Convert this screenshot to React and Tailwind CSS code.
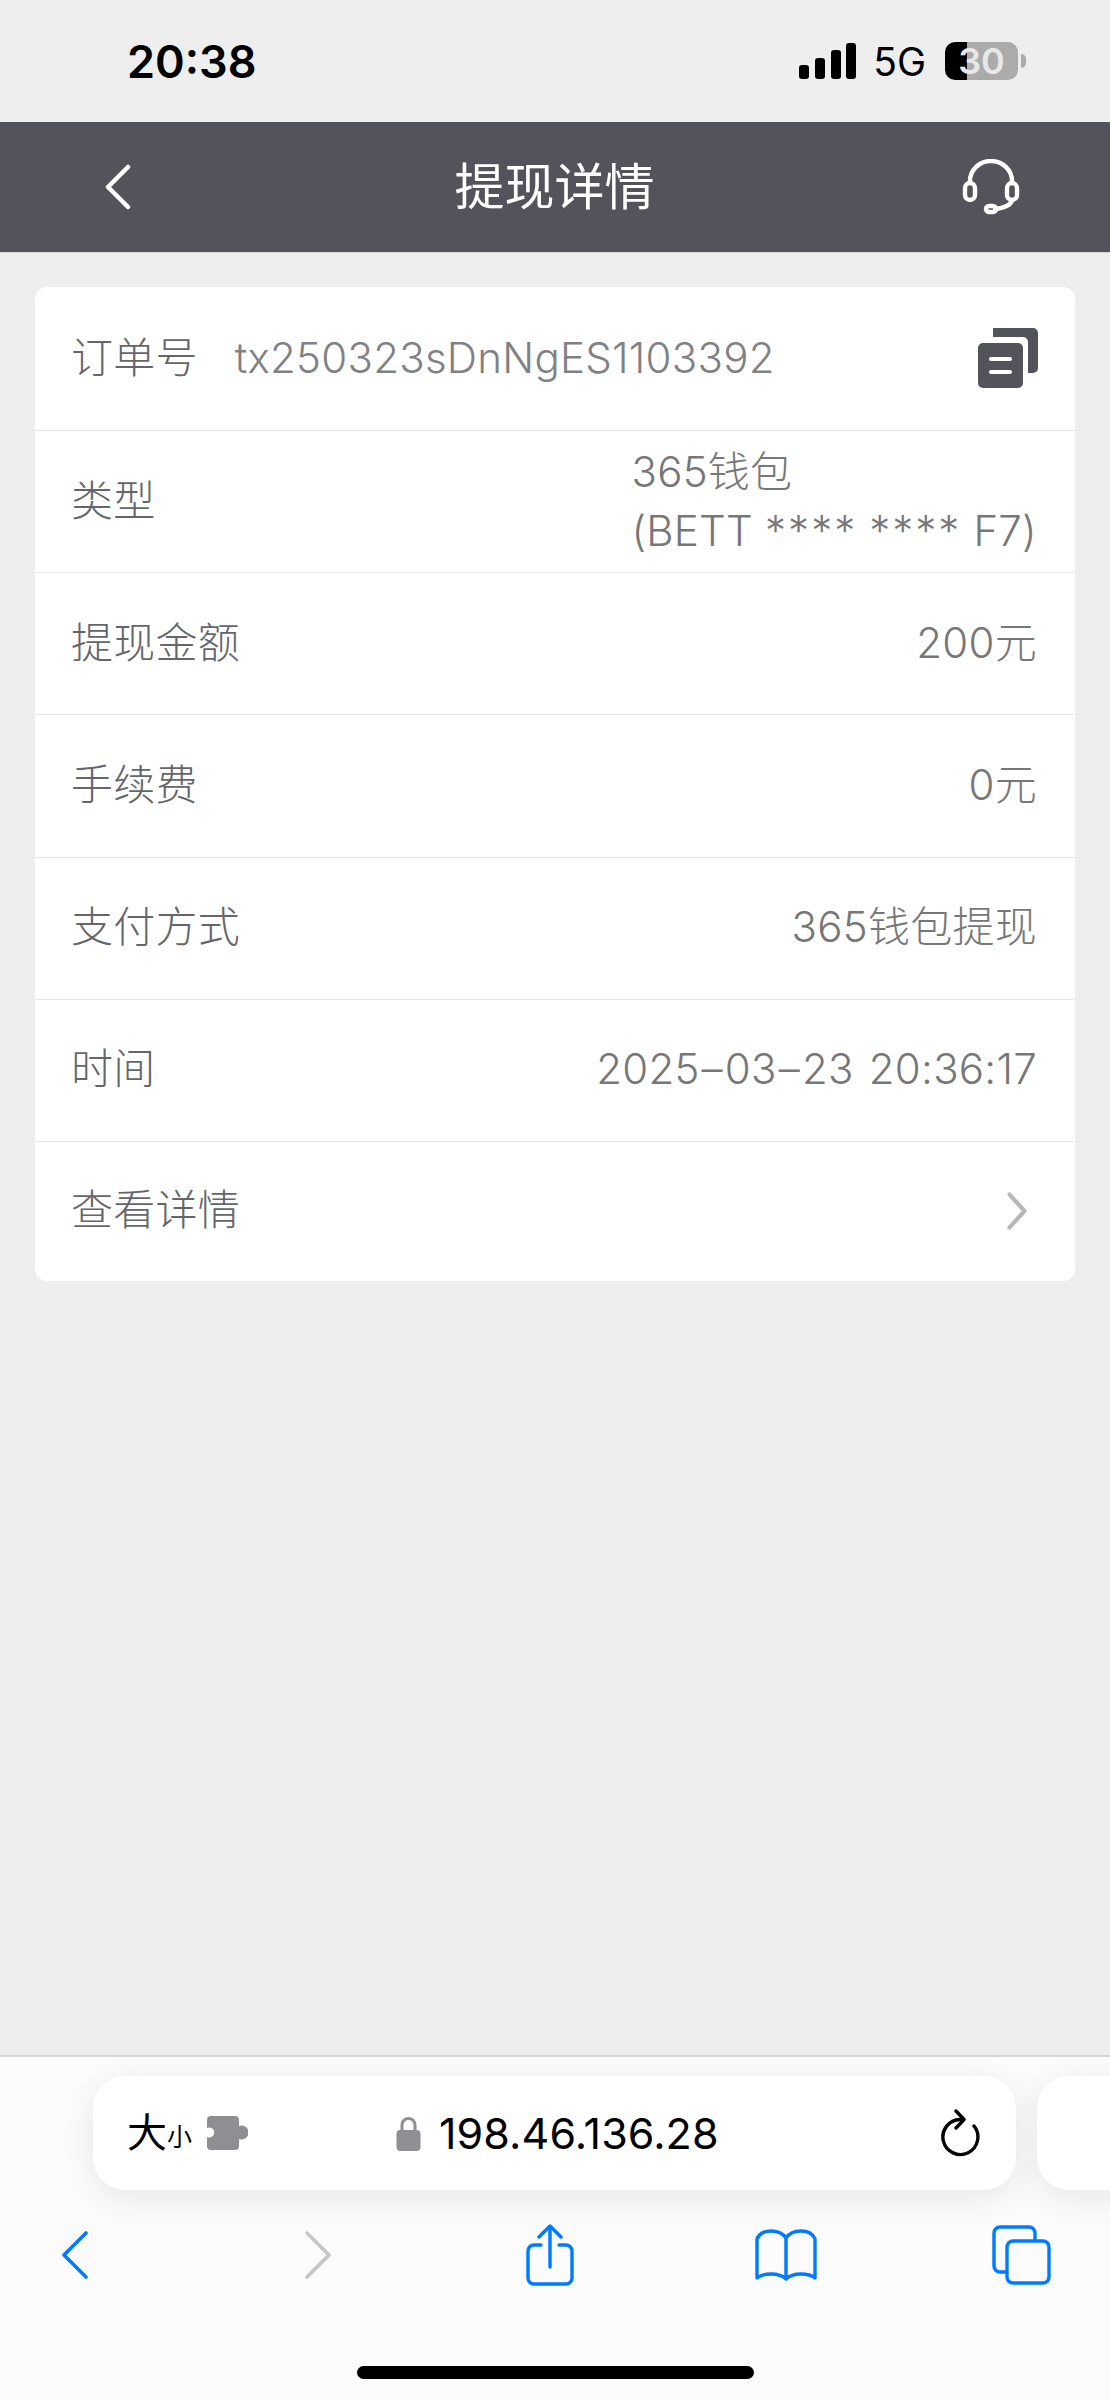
const Dash = () => <span className="mx-[2px]">–</span>;

const rows = [
    { label: "提现金额", value: "200元" },
    { label: "手续费", value: "0元" },
    { label: "支付方式", value: "365钱包提现" },
    { label: "时间", value: <>2025<Dash />03<Dash />23<span className="ml-[3px]"> 20:36:17</span></> },
];

const Row = ({ children, className = "h-[142.2px] border-b" }) => (
    <div className={`${className} shrink-0 flex items-center justify-between pl-[36px] pr-[38px] pb-[2px] border-[#e6e6e6]`}>
        {children}
    </div>
);

const Label = ({ children }) => <span className="text-[#65666c]">{children}</span>;

function StatusBar() {
    return (
        <div className="h-[122px] shrink-0 bg-[#eeeeee] flex items-center text-black">
            <span className="ml-[127px] text-[45px] leading-none font-semibold">20:38</span>
            <svg className="ml-auto" width="58" height="36" viewBox="0 0 58 36" fill="#000">
                <rect x="0" y="22" width="10" height="14" rx="3" />
                <rect x="16" y="15" width="10" height="21" rx="3" />
                <rect x="32" y="7" width="10" height="29" rx="3" />
                <rect x="47" y="0" width="10" height="36" rx="3" />
            </svg>
            <span className="ml-[16px] text-[39px] leading-none font-normal">5G</span>
            <div className="relative ml-[19px] mr-[92px] w-[73px] h-[38px] rounded-[10px] overflow-visible">
                <div className="flex h-full rounded-[10px] overflow-hidden">
                    <div className="w-[22px] bg-black" />
                    <div className="flex-1 bg-[#ababab]" />
                </div>
                <span className="absolute inset-0 flex items-center justify-center text-[36px] leading-none font-semibold text-[#e8e8e8]">30</span>
                <div className="absolute left-[76px] top-[12px] w-[5px] h-[14px] rounded-r-full bg-[#ababab]" />
            </div>
        </div>
    );
}

function Header() {
    return (
        <div className="h-[131px] shrink-0 bg-[#52535b] border-b border-[#d8d8d8] flex items-center justify-between pl-[105px] pr-[90px]">
            <svg width="26" height="46" viewBox="0 0 26 46" fill="none" stroke="#fff" strokeWidth="4.5" strokeLinecap="round" strokeLinejoin="round">
                <path d="M23 3 L3 23 L23 43" />
            </svg>
            <h1 className="ml-[16px] text-[50px] leading-none font-normal text-white">提现详情</h1>
            <svg width="58" height="56" viewBox="0 0 58 56" fill="none" stroke="#fff" strokeWidth="4.4" strokeLinecap="round">
                <path d="M8 24 V22 a21 20 0 0 1 42 0 V24" />
                <rect x="3" y="24" width="10" height="17" rx="5" />
                <rect x="45" y="24" width="10" height="17" rx="5" />
                <path d="M50 41 C49 46 42 49 33 50" />
                <rect x="24" y="47" width="10" height="6" rx="3" />
            </svg>
        </div>
    );
}

function DetailCard() {
    return (
        <div className="flex flex-col bg-white rounded-[12px] text-[42px] leading-none text-[#777777] font-light tracking-[0.25px]">
            <Row className="h-[144px] border-b">
                <Label>订单号</Label>
                <span className="ml-[37px] text-[#808185]">tx250323sDnNgES1103392</span>
                <svg className="ml-auto -mr-[1px]" width="60" height="60" viewBox="0 0 60 60" fill="#52535b">
                    <path d="M15 0 H55 a5 5 0 0 1 5 5 V40 a5 5 0 0 1 -5 5 H50 V14 a5 5 0 0 0 -5 -5 H15 Z" />
                    <rect x="0" y="15" width="45" height="45" rx="5" />
                    <rect x="11" y="29" width="23" height="4" rx="2" fill="#fff" />
                    <rect x="11" y="42" width="23" height="4" rx="2" fill="#fff" />
                </svg>
            </Row>
            <Row>
                <Label>类型</Label>
                <div className="leading-[59px]">
                    <div>365钱包</div>
                    <div>(BETT <span className="tracking-[2px]">****</span> <span className="tracking-[2px]">****</span> F7)</div>
                </div>
            </Row>
            {rows.map((r) => (
                <Row key={r.label}>
                    <Label>{r.label}</Label>
                    <span>{r.value}</span>
                </Row>
            ))}
            <Row className="h-[139px]">
                <Label>查看详情</Label>
                <svg className="mr-[10px] mt-[2px]" width="20" height="38" viewBox="0 0 20 38" fill="none" stroke="#b8b8b8" strokeWidth="4.2" strokeLinecap="round" strokeLinejoin="round">
                    <path d="M2.5 2.5 L17.5 19 L2.5 35.5" />
                </svg>
            </Row>
        </div>
    );
}

function UrlBar() {
    return (
        <div className="flex pl-[93px] pt-[19px] gap-[21px] overflow-hidden pb-[38px]">
            <div className="w-[923px] h-[114px] shrink-0 bg-white rounded-[32px] shadow-[0_8px_36px_rgba(0,0,0,0.09)] flex items-center pl-[34px] pr-[36px] text-black">
                <span className="text-[40px] leading-none">大</span>
                <span className="text-[25px] leading-none mt-[9px]">小</span>
                <svg className="ml-[15px]" width="41" height="34" viewBox="0 0 41 34" fill="#8e8e93">
                    <path d="M4 0 H28 a4 4 0 0 1 4 4 V10 a7 7 0 1 1 0 13 V30 a4 4 0 0 1 -4 4 H4 a4 4 0 0 1 -4 -4 V21 a5 5 0 1 0 0 -9 V4 a4 4 0 0 1 4 -4 Z" />
                </svg>
                <svg className="ml-[148px]" width="25" height="35" viewBox="0 0 25 35" fill="none">
                    <path d="M6 15 V9 a6.5 6.5 0 0 1 13 0 V15" stroke="#8e8e93" strokeWidth="3" />
                    <rect x="0.5" y="14" width="24" height="21" rx="4" fill="#8e8e93" />
                </svg>
                <span className="ml-[18px] text-[43px] leading-none font-normal tracking-[0.1px]">198.46.136.28</span>
                <svg className="ml-auto" width="40" height="48" viewBox="0 0 40 48" fill="none" stroke="#000" strokeWidth="3.4" strokeLinecap="round" strokeLinejoin="round">
                    <path d="M34 17 A17.5 17.5 0 1 1 20 10.5 H22" />
                    <path d="M16 2 L24 10.5 L16 19" />
                </svg>
            </div>
            <div className="w-[200px] h-[114px] shrink-0 bg-white rounded-[32px] shadow-[0_8px_36px_rgba(0,0,0,0.09)]" />
        </div>
    );
}

function NavIcons() {
    return (
        <div className="flex items-center h-[62px] -mt-[4px] pl-[61px]">
            <svg width="28" height="48" viewBox="0 0 28 48" fill="none" stroke="#007aff" strokeWidth="3.6" strokeLinecap="round" strokeLinejoin="round">
                <path d="M25 2 L3 24 L25 46" />
            </svg>
            <svg className="ml-[215px]" width="28" height="48" viewBox="0 0 28 48" fill="none" stroke="#c6c6c8" strokeWidth="3.6" strokeLinecap="round" strokeLinejoin="round">
                <path d="M3 2 L25 24 L3 46" />
            </svg>
            <svg className="ml-[194px]" width="48" height="62" viewBox="0 0 48 62" fill="none" stroke="#007aff" strokeWidth="3.4" strokeLinecap="round" strokeLinejoin="round">
                <path d="M24 2 V43 M13 13 L24 2 L35 13" />
                <path d="M15 21 H8 a6 6 0 0 0 -6 6 V54 a6 6 0 0 0 6 6 H40 a6 6 0 0 0 6 -6 V27 a6 6 0 0 0 -6 -6 H33" />
            </svg>
            <svg className="ml-[181px]" width="62" height="52" viewBox="0 0 62 52" fill="none" stroke="#007aff" strokeWidth="3.4" strokeLinecap="round" strokeLinejoin="round">
                <path d="M31 9 C27 3 21 2 16 2 C9 2 4 5 2 10 V49 C8 44 24 43 31 50 C38 43 54 44 60 49 V10 C58 5 53 2 46 2 C41 2 35 3 31 9 V50" />
            </svg>
            <svg className="ml-[175px]" width="59" height="60" viewBox="0 0 59 60" fill="none" stroke="#007aff" strokeWidth="3.4" strokeLinejoin="round">
                <path d="M14 47 H8 a6 6 0 0 1 -6 -6 V8 a6 6 0 0 1 6 -6 H37 a6 6 0 0 1 6 6 V16" />
                <rect x="15" y="16" width="42" height="42" rx="6" fill="#fcfcfc" />
            </svg>
        </div>
    );
}

export default function App() {
    return (
        <div className="w-[1110px] h-[2400px] flex flex-col bg-[#eeeeee] overflow-hidden" style={{ fontFamily: '"Inter", "Noto Sans CJK SC", sans-serif' }}>
            <StatusBar />
            <Header />
            <div className="flex-1 px-[35px] pt-[34px]">
                <DetailCard />
            </div>
            <div className="h-[345px] shrink-0 bg-[#fcfcfc] border-t-2 border-[#d6d6d6] flex flex-col">
                <UrlBar />
                <NavIcons />
                <div className="mt-auto mb-[21px] mx-auto w-[397px] h-[13px] rounded-full bg-black" />
            </div>
        </div>
    );
}
